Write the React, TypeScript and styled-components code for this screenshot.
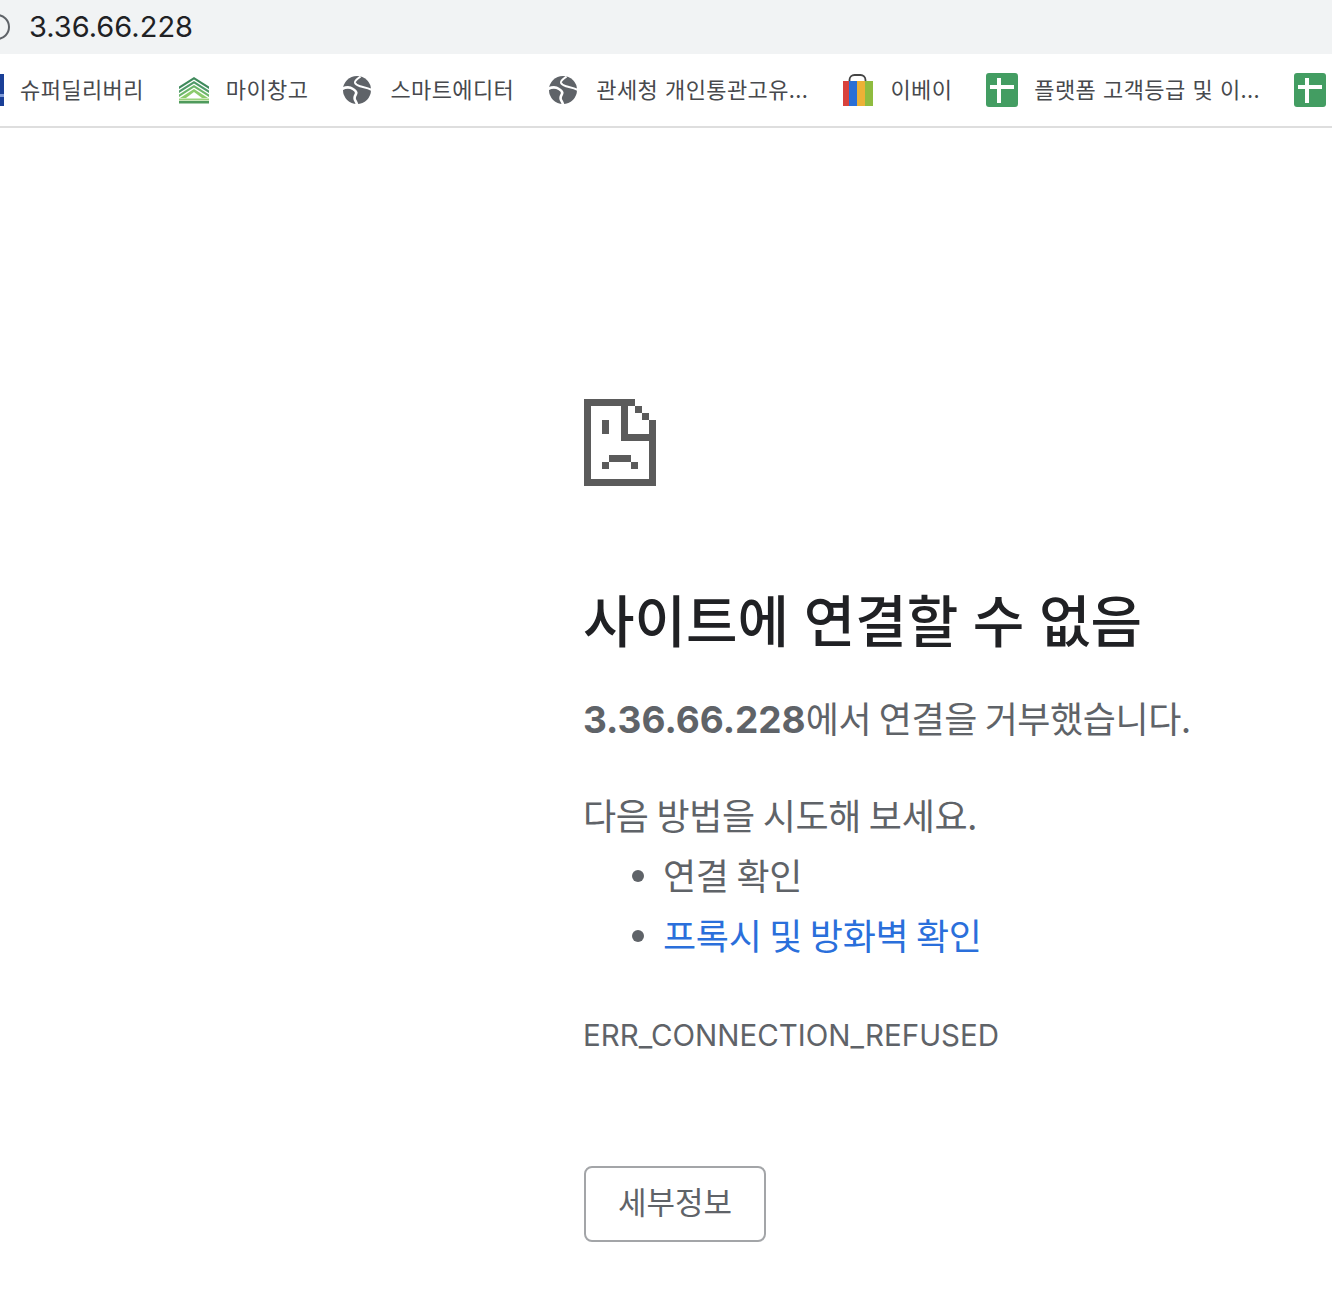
import React from "react"
import styled, { createGlobalStyle } from "styled-components"

const KOREAN = `"Noto Sans CJK KR", "Noto Sans", sans-serif`
const LATIN = `Inter, "Noto Sans CJK KR", sans-serif`
const SAD = "#5b5b5b"

const GlobalStyle = createGlobalStyle`
  html, body {
    margin: 0;
    padding: 0;
    background: #fff;
  }
  body {
    font-family: ${KOREAN};
    overflow: hidden;
  }
`

const Globe = () => (
  <svg width="32" height="32" viewBox="1 0 32 32">
    <circle cx="16" cy="16" r="14" fill="#5f6368" />
    <path d="M19.500 2.500C16.500 5 13.500 6.500 14 8.800 14.500 10.800 16.500 11.500 19 12.300 22 13.200 26 13.500 31 16" fill="none" stroke="#fff" strokeWidth="2" />
    <path d="M1 15C5 13 9 13 12 15 15 16.800 16 18 15 20 13.500 22.500 12.800 23.500 14 26 15 28 16 29 16 31" fill="none" stroke="#fff" strokeWidth="2.600" />
  </svg>
)

const HouseIcon = () => (
  <svg width="32" height="32" viewBox="0 0 32 32">
    <path d="M16 3 31 12.500v2.500L16 5.500 1 15v-2.500z" fill="#3f8a5c" />
    <path d="M16 7 31 16.500V19L16 9.500 1 19v-2.500z" fill="#4f9a68" />
    <path d="M16 11 31 20.500V23L16 13.500 1 23v-2.500z" fill="#6cb66a" />
    <path d="M16 15 30 24H2z" fill="#8ccb6c" />
    <path d="M16 18 24 24H8z" fill="#fff" />
    <rect x="1" y="24.500" width="30" height="2" fill="#9ad27c" />
    <rect x="1" y="27" width="30" height="2.500" fill="#4f9a5c" />
  </svg>
)

const BagIcon = () => (
  <svg width="32" height="34" viewBox="0 0 32 34">
    <path d="M7.500 9V7a5 5 0 0 1 5-5h6a5 5 0 0 1 5 5v2" fill="none" stroke="#444" strokeWidth="1.800" />
    <rect x="1" y="8" width="6" height="25" fill="#d9423c" />
    <rect x="7" y="8" width="8" height="25" fill="#2a6fd6" />
    <rect x="15" y="8" width="8" height="25" fill="#ecb136" />
    <rect x="23" y="8" width="8" height="25" fill="#8fbc3f" />
  </svg>
)

const SheetIcon = () => (
  <svg width="32" height="34" viewBox="0 0 32 34">
    <rect width="32" height="34" rx="3" fill="#439d62" />
    <rect x="4" y="12" width="24" height="4" fill="#fff" />
    <rect x="11" y="5" width="4" height="25" fill="#fff" />
  </svg>
)

const BlueIcon = () => (
  <svg width="32" height="32" viewBox="0 0 32 32">
    <rect width="32" height="32" fill="#1a3f97" />
    <rect x="28" y="20" width="4" height="3" fill="#7f9bd8" />
  </svg>
)

const SadFile = () => (
  <ErrorIcon viewBox="0 0 72 87" shapeRendering="crispEdges">
    <path d="M0 0h51v7h-7v28h21v-7h7v59H0zM7 7v73h58V42H37V7z" fill={SAD} fillRule="evenodd" />
    <rect x="51" y="7" width="7" height="7" fill={SAD} />
    <rect x="58" y="14" width="7" height="7" fill={SAD} />
    <rect x="65" y="21" width="7" height="7" fill={SAD} />
    <rect x="18" y="21" width="7" height="14" fill={SAD} />
    <rect x="25" y="56" width="22" height="7" fill={SAD} />
    <rect x="18" y="63" width="7" height="7" fill={SAD} />
    <rect x="47" y="63" width="7" height="7" fill={SAD} />
  </ErrorIcon>
)

const bookmarks = [
  { icon: <BlueIcon />, label: "슈퍼딜리버리" },
  { icon: <HouseIcon />, label: "마이창고" },
  { icon: <Globe />, label: "스마트에디터" },
  { icon: <Globe />, label: "관세청 개인통관고유..." },
  { icon: <BagIcon />, label: "이베이" },
  { icon: <SheetIcon />, label: "플랫폼 고객등급 및 이..." },
  { icon: <SheetIcon />, label: "" },
]

const App = () => {
  return (
    <Page>
      <GlobalStyle />
      <AddressBar>
        <SiteInfo />
        <Url>3.36.66.228</Url>
      </AddressBar>
      <BookmarkBar>
        {bookmarks.map((item, i) => (
          <Bookmark key={i}>
            {item.icon}
            {item.label && <BookmarkLabel>{item.label}</BookmarkLabel>}
          </Bookmark>
        ))}
      </BookmarkBar>
      <Main>
        <SadFile />
        <Title>사이트에 연결할 수 없음</Title>
        <Summary>
          <Host>3.36.66.228</Host>에서 연결을 거부했습니다.
        </Summary>
        <Hint>다음 방법을 시도해 보세요.</Hint>
        <Suggestions>
          <li>연결 확인</li>
          <li>
            <Link href="#proxy">프록시 및 방화벽 확인</Link>
          </li>
        </Suggestions>
        <ErrorCode>ERR_CONNECTION_REFUSED</ErrorCode>
        <DetailsButton>세부정보</DetailsButton>
      </Main>
    </Page>
  )
}

export default App

const Page = styled.div`
  width: 1332px;
  height: 1312px;
  overflow: hidden;
  background: #fff;
`

const AddressBar = styled.div`
  display: flex;
  align-items: center;
  gap: 19px;
  height: 54px;
  background: #f1f3f4;
`

const SiteInfo = styled.span`
  flex: none;
  box-sizing: border-box;
  width: 26px;
  height: 26px;
  margin-left: -16px;
  border: 2.5px solid #5f6368;
  border-radius: 50%;
`

const Url = styled.span`
  margin-top: -2px;
  font-family: ${LATIN};
  font-size: 29px;
  color: #202124;
`

const BookmarkBar = styled.div`
  display: flex;
  align-items: center;
  gap: 34px;
  height: 72px;
  margin-left: -28px;
  border-bottom: 2px solid #dedede;
  white-space: nowrap;
`

const Bookmark = styled.div`
  display: flex;
  flex: none;
  align-items: center;
  gap: 16px;
  height: 34px;
`

const BookmarkLabel = styled.span`
  margin-top: -4px;
  font-size: 22px;
  letter-spacing: 0.4px;
  word-spacing: 1.5px;
  line-height: 32px;
  color: #47494d;
`

const Main = styled.main`
  display: flex;
  flex-direction: column;
  align-items: flex-start;
  padding: 271px 0 0 584px;
  color: #5f6368;
`

const ErrorIcon = styled.svg`
  width: 72px;
  height: 87px;
`

const Title = styled.h1`
  margin: 97px 0 0 -1px;
  font-size: 56px;
  font-weight: 500;
  word-spacing: 2px;
  line-height: 70px;
  color: #202124;
  white-space: nowrap;
`

const Summary = styled.p`
  margin: 34px 0 0 -1px;
  font-size: 36px;
  letter-spacing: -0.4px;
  line-height: 60px;
  white-space: nowrap;
`

const Host = styled.b`
  font-family: ${LATIN};
  font-size: 37px;
  font-weight: 700;
  letter-spacing: 0;
`

const Hint = styled.p`
  margin: 34px 0 0 -1px;
  font-size: 36px;
  letter-spacing: -0.3px;
  line-height: 60px;
  white-space: nowrap;
`

const Suggestions = styled.ul`
  margin: 0 0 0 -1px;
  padding: 0 0 0 80px;
  list-style: none;
  font-size: 36px;
  letter-spacing: -0.3px;
  line-height: 60px;
  white-space: nowrap;

  li {
    display: flex;
    align-items: center;
  }

  li::before {
    content: "";
    flex: none;
    width: 12px;
    height: 12px;
    margin: 4px 19px 0 -31px;
    border-radius: 50%;
    background: #5f6368;
  }
`

const Link = styled.a`
  color: #2a6fdb;
  text-decoration: none;
`

const ErrorCode = styled.div`
  margin: 51px 0 0 -1px;
  font-family: ${LATIN};
  font-size: 29.5px;
  line-height: 40px;
  white-space: nowrap;
`

const DetailsButton = styled.button`
  box-sizing: border-box;
  width: 182px;
  height: 76px;
  margin-top: 111px;
  padding: 0 0 8px;
  border: 2px solid #a3a5a8;
  border-radius: 8px;
  background: #fff;
  font-family: ${KOREAN};
  font-size: 31px;
  color: #5f6368;
`
